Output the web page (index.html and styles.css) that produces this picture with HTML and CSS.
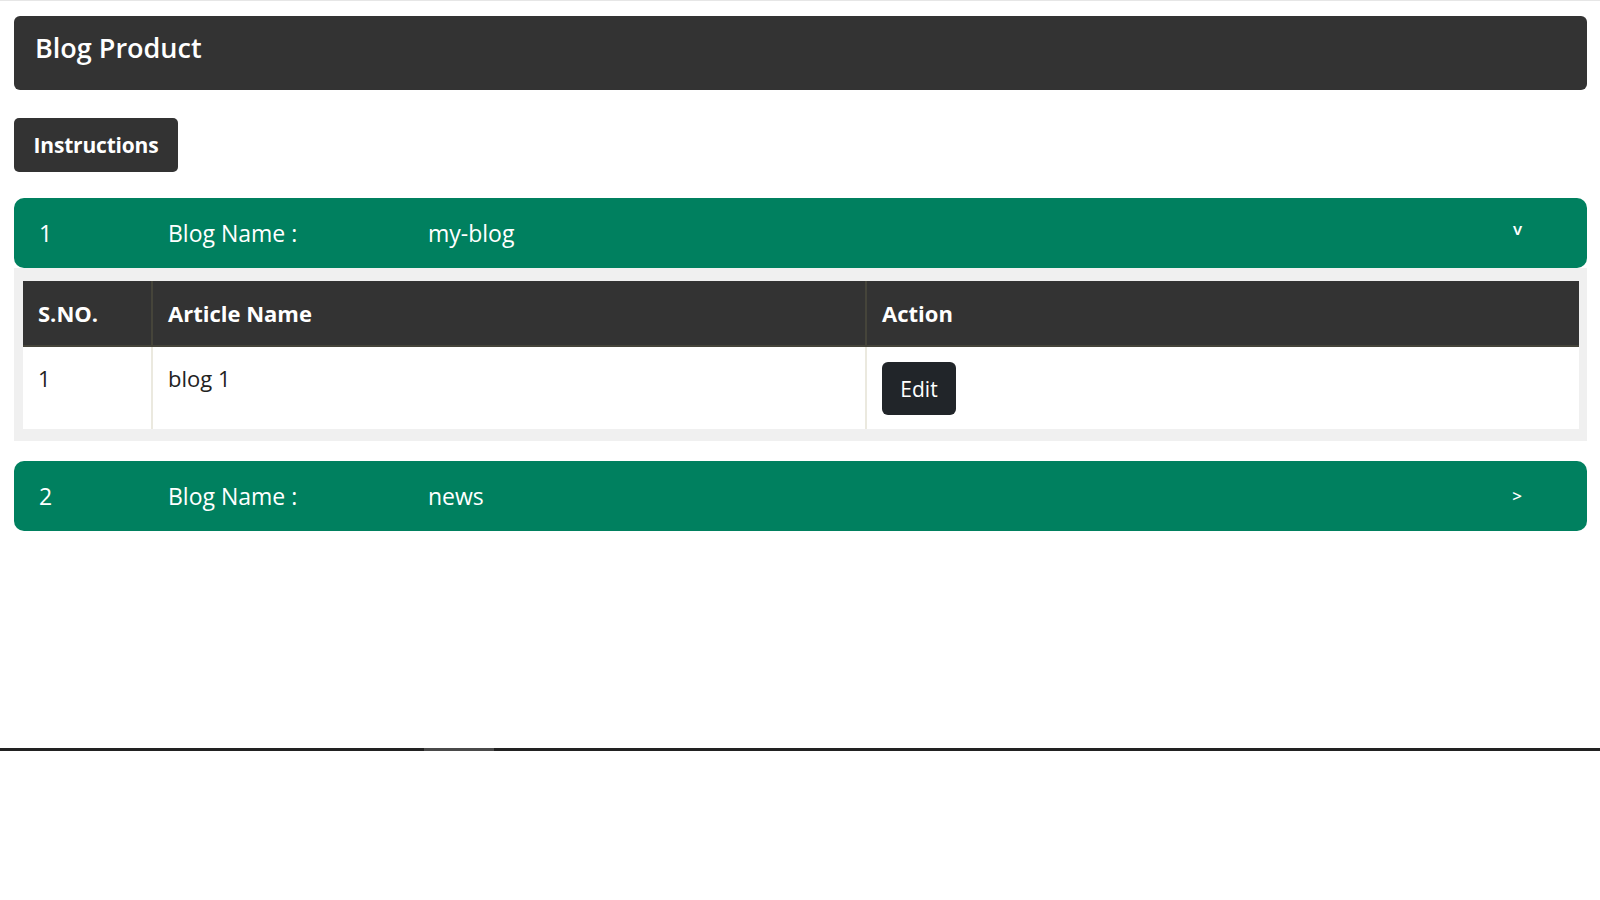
FILE: index.html
```html
<!DOCTYPE html>
<html lang="en">
<head>
    <meta charset="UTF-8">
    <title>Blog Product</title>
    <link rel="stylesheet" href="styles.css">
</head>
<body>
    <div class="page">
        <div class="title-bar">
            <h1>Blog Product</h1>
        </div>

        <button class="btn-instructions">Instructions</button>

        <div class="blog">
            <div class="blog-head">
                <span class="blog-no">1</span>
                <span class="blog-label">Blog Name :</span>
                <span class="blog-name">my-blog</span>
                <span class="blog-toggle open">v</span>
            </div>
            <div class="blog-body">
                <table class="articles">
                    <thead>
                        <tr>
                            <th class="col-no">S.NO.</th>
                            <th class="col-name">Article Name</th>
                            <th>Action</th>
                        </tr>
                    </thead>
                    <tbody>
                        <tr>
                            <td>1</td>
                            <td>blog 1</td>
                            <td><button class="btn-edit">Edit</button></td>
                        </tr>
                    </tbody>
                </table>
            </div>
        </div>

        <div class="blog">
            <div class="blog-head">
                <span class="blog-no">2</span>
                <span class="blog-label">Blog Name :</span>
                <span class="blog-name">news</span>
                <span class="blog-toggle">&gt;</span>
            </div>
        </div>
    </div>

    <div class="scroll-track">
        <div class="scroll-thumb"></div>
    </div>
</body>
</html>
```

FILE: styles.css
```css
* {
    box-sizing: border-box;
}

body {
    margin: 0;
    font-family: "Open Sans", "Noto Sans", Arial, sans-serif;
    background: white;
    border-top: 1px solid #e6e6e6;
}

.page {
    height: 747px;
    padding: 15px 13px 0 14px;
}

.title-bar {
    background: #333333;
    border-radius: 6px;
    height: 74px;
    padding: 14px 21px 0;
}

.title-bar h1 {
    margin: 0;
    color: white;
    font-size: 27px;
    font-weight: 600;
    line-height: 36px;
}

.btn-instructions {
    display: block;
    margin-top: 28px;
    width: 164px;
    height: 54px;
    background: #333333;
    color: white;
    border: none;
    border-radius: 5px;
    font-family: inherit;
    font-size: 21px;
    font-weight: 700;
    letter-spacing: -0.2px;
    padding: 0;
}

.blog {
    margin-top: 26px;
}

.blog + .blog {
    margin-top: 20px;
}

.blog-head {
    display: flex;
    align-items: center;
    height: 70px;
    background: #00805f;
    color: white;
    border-radius: 10px;
    padding: 0 65px 0 25px;
    font-size: 23px;
}

.blog-no {
    width: 129px;
}

.blog-label {
    width: 260px;
}

.blog-name {
    flex: 1;
}

.blog-toggle {
    font-size: 17px;
    font-weight: 600;
    margin-top: -2px;
}

.blog-toggle.open {
    margin-top: -9px;
}

.blog-body {
    background: #f0f0f0;
    padding: 13px 8px 12px 9px;
}

.articles {
    width: 100%;
    border-collapse: collapse;
    background: white;
    font-size: 22px;
}

.articles th {
    background: #333333;
    color: white;
    text-align: left;
    font-weight: 700;
    height: 65px;
    padding: 0 15px;
    border-left: 2px solid #45443a;
    border-bottom: 2px solid #45443a;
}

.articles th:first-child {
    border-left: none;
}

.articles .col-no {
    width: 129px;
}

.articles .col-name {
    width: 714px;
}

.articles td {
    vertical-align: top;
    color: #222;
    padding: 16px 16px 14px 15px;
    border-left: 2px solid #ebe9df;
    line-height: 30px;
}

.articles td:first-child {
    border-left: none;
}

.btn-edit {
    background: #212529;
    color: white;
    border: none;
    border-radius: 6px;
    width: 74px;
    height: 53px;
    font-family: inherit;
    font-size: 21px;
    padding: 0;
    margin-top: -1px;
}

.scroll-track {
    height: 3px;
    background: #222222;
    padding-left: 424px;
}

.scroll-thumb {
    width: 70px;
    height: 3px;
    background: #4a4a4a;
}
```
